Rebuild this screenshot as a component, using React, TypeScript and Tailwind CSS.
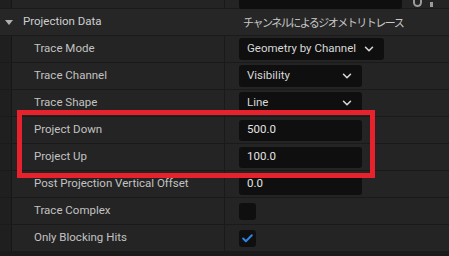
import { ChevronDown, Check } from "lucide-react";

const rowBase = "flex h-[27px] border-b border-[#1a1a1a] bg-[#242424]";

function Dropdown({ label, width }: { label: string; width: string }) {
  return (
    <div className={`flex h-[22px] ${width} items-center justify-between rounded-[3px] bg-[#0f0f0f] pl-[8px] pr-[8px] text-[#d8d8d8]`}>
      <span>{label}</span>
      <ChevronDown className="h-[14px] w-[14px]" strokeWidth={2.6} />
    </div>
  );
}

function NumberBox({ value }: { value: string }) {
  return (
    <div className="flex h-[21px] w-[123px] items-center rounded-[3px] bg-[#0f0f0f] pl-[8px] text-[#e2e2e2]">
      {value}
    </div>
  );
}

function PropRow({ name, children }: { name: string; children?: React.ReactNode }) {
  return (
    <div className={rowBase}>
      <div className="w-[12px] shrink-0 bg-[#1f1f1f] border-r border-[#161616]" />
      <div className="flex w-[212px] shrink-0 items-center pl-[22px] text-[#c2c2c2]">{name}</div>
      <div className="w-px shrink-0 bg-[#1a1a1a]" />
      <div className="flex flex-1 items-center pl-[14px]">{children}</div>
    </div>
  );
}

export default function App() {
  const rows = [
    { name: "Trace Mode", node: <Dropdown label="Geometry by Channel" width="w-[145px]" /> },
    { name: "Trace Channel", node: <Dropdown label="Visibility" width="w-[123px]" /> },
    { name: "Trace Shape", node: <Dropdown label="Line" width="w-[123px]" /> },
    { name: "Project Down", node: <NumberBox value="500.0" /> },
    { name: "Project Up", node: <NumberBox value="100.0" /> },
    { name: "Post Projection Vertical Offset", node: <NumberBox value="0.0" /> },
    {
      name: "Trace Complex",
      node: <div className="h-[17px] w-[17px] rounded-[3px] bg-[#0f0f0f]" />,
    },
    {
      name: "Only Blocking Hits",
      node: (
        <div className="flex h-[17px] w-[17px] items-center justify-center rounded-[3px] bg-[#0f0f0f]">
          <Check className="h-[13px] w-[13px] text-[#2f86e6]" strokeWidth={3.5} />
        </div>
      ),
    },
  ];

  return (
    <div className="relative h-[256px] w-[449px] overflow-hidden bg-[#1a1a1a] text-[11.5px] leading-none font-['Roboto','Noto_Sans_CJK_JP',sans-serif]">
      {/* partial row above */}
      <div className="flex h-[9px] border-b border-[#1a1a1a] bg-[#242424]">
        <div className="w-[12px] shrink-0 bg-[#1f1f1f] border-r border-[#161616]" />
        <div className="w-[212px] shrink-0" />
        <div className="w-px shrink-0 bg-[#1a1a1a]" />
        <div className="flex flex-1 items-end pl-[14px]">
          <div className="h-[14px] w-[163px] -mb-px rounded-[3px] bg-[#0f0f0f] self-end" />
          <div className="ml-[11px] mb-[1px] h-[8px] w-[9px] rounded-b-full border-x-2 border-b-2 border-[#9a9a9a]" />
          <div className="ml-[8px] mb-[1px] h-[5px] w-[3px] bg-[#9a9a9a]" />
        </div>
      </div>

      {/* category header */}
      <div className="flex h-[27px] items-center border-b border-[#1a1a1a] bg-[#262626]">
        <div className="ml-[5px] h-0 w-0 border-x-[4px] border-t-[5px] border-x-transparent border-t-[#b0b0b0]" />
        <div className="w-[215px] shrink-0 pl-[10px] text-[#cfcfcf]">Projection Data</div>
        <div className="pl-[15px] text-[11px] tracking-[-1.5px] text-[#c8c8c8] font-['Noto_Sans_CJK_JP',sans-serif]">
          チャンネルによるジオメトリトレース
        </div>
      </div>

      {rows.map((r) => (
        <PropRow key={r.name} name={r.name}>
          {r.node}
        </PropRow>
      ))}

      {/* highlight frame */}
      <div className="pointer-events-none absolute left-[17px] top-[110px] h-[68px] w-[358px] border-[5px] border-[#e8222c]" />
    </div>
  );
}
